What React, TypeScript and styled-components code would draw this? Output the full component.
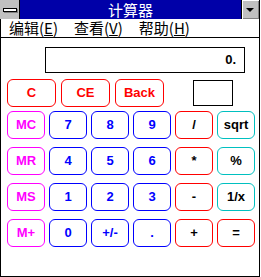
import { FC } from 'react';
import styled, { createGlobalStyle } from 'styled-components';

const GlobalStyle = createGlobalStyle`
  html, body {
    margin: 0;
    padding: 0;
    background: #ffffff;
  }
`;

const FONT = `"Liberation Sans", Arial, "Noto Sans CJK SC", sans-serif`;
const CJK = `"Noto Sans CJK SC", "Liberation Sans", sans-serif`;

const Window = styled.div`
  box-sizing: border-box;
  width: 260px;
  height: 277px;
  border: 1px solid #000000;
  border-top: none;
  background: #ffffff;
  display: flex;
  flex-direction: column;
  font-family: ${FONT};
`;

const TitleBar = styled.div`
  display: flex;
  align-items: center;
  height: 19px;
  margin: 0 -1px;
  background: #0000a8;
`;

const SysBox = styled.div`
  box-sizing: border-box;
  width: 20px;
  height: 19px;
  background: #c0c0c0;
  border-right: 1px solid #000000;
  display: flex;
  align-items: center;
  justify-content: center;
`;

const SysBar = styled.div`
  box-sizing: border-box;
  width: 14px;
  height: 4px;
  margin-top: 1px;
  background: #ffffff;
  border: 1px solid #000000;
  box-shadow: 1px 1px 0 #808080;
`;

const Title = styled.div`
  flex: 1;
  height: 19px;
  text-align: center;
  color: #ffffff;
  font-family: ${CJK};
  font-size: 15px;
  line-height: 19px;
  overflow: visible;
`;

const DropBox = styled.div`
  box-sizing: border-box;
  width: 19px;
  height: 19px;
  background: #c0c0c0;
  border-left: 1px solid #000000;
  border-right: 1px solid #000000;
  box-shadow: inset 1px 1px 0 #ffffff, inset -1px -1px 0 #808080;
  display: flex;
  align-items: center;
  justify-content: center;
`;

const Triangle = styled.div`
  width: 0;
  height: 0;
  border-left: 4px solid transparent;
  border-right: 4px solid transparent;
  border-top: 4px solid #000000;
  margin-left: -1px;
`;

const MenuBar = styled.div`
  display: flex;
  align-items: center;
  gap: 16px;
  height: 18px;
  padding-left: 8px;
  border-bottom: 1px solid #000000;
  font-family: ${CJK};
  font-size: 15px;
  line-height: 18px;
  color: #000000;
`;

const MenuItem = styled.span`
  white-space: nowrap;
  line-height: 18px;
`;

const Hotkey = styled.span`
  text-decoration: underline;
  text-underline-offset: 1px;
`;

const Body = styled.div`
  display: flex;
  flex-direction: column;
  padding: 9px 0 0 6px;
`;

const Display = styled.div`
  box-sizing: border-box;
  width: 200px;
  height: 26px;
  margin-left: 38px;
  border: 1px solid #000000;
  padding-right: 8px;
  text-align: right;
  font-size: 13px;
  font-weight: bold;
  line-height: 24px;
`;

const TopRow = styled.div`
  display: flex;
  align-items: center;
  gap: 5px;
  margin-top: 6px;
  height: 28px;
`;

const MemoryBox = styled.div`
  box-sizing: border-box;
  width: 40px;
  height: 26px;
  margin-left: 24px;
  border: 1px solid #000000;
`;

const Keypad = styled.div`
  display: grid;
  grid-template-columns: repeat(6, 38px);
  grid-auto-rows: 28px;
  column-gap: 4px;
  row-gap: 8px;
  margin-top: 4px;
`;

const Key = styled.button<{ $border: string; $color: string; $wide?: boolean }>`
  box-sizing: border-box;
  width: ${({ $wide }) => ($wide ? '49px' : '38px')};
  height: 28px;
  margin: 0;
  padding: 0;
  background: #ffffff;
  border: 1px solid ${({ $border }) => $border};
  border-radius: 6px;
  color: ${({ $color }) => $color};
  font-family: ${FONT};
  font-size: 13px;
  font-weight: bold;
  line-height: 26px;
  text-align: center;
`;

const RED = '#ff0000';
const BLUE = '#0000ff';
const PINK = '#ff00ff';
const CYAN = '#00c0c0';
const BLACK = '#000000';

type KeyDef = { label: string; border: string; color: string };

const keys: KeyDef[] = [
  { label: 'MC', border: PINK, color: PINK },
  { label: '7', border: BLUE, color: BLUE },
  { label: '8', border: BLUE, color: BLUE },
  { label: '9', border: BLUE, color: BLUE },
  { label: '/', border: RED, color: BLACK },
  { label: 'sqrt', border: CYAN, color: BLACK },
  { label: 'MR', border: PINK, color: PINK },
  { label: '4', border: BLUE, color: BLUE },
  { label: '5', border: BLUE, color: BLUE },
  { label: '6', border: BLUE, color: BLUE },
  { label: '*', border: RED, color: BLACK },
  { label: '%', border: CYAN, color: BLACK },
  { label: 'MS', border: PINK, color: PINK },
  { label: '1', border: BLUE, color: BLUE },
  { label: '2', border: BLUE, color: BLUE },
  { label: '3', border: BLUE, color: BLUE },
  { label: '-', border: RED, color: BLACK },
  { label: '1/x', border: CYAN, color: BLACK },
  { label: 'M+', border: PINK, color: PINK },
  { label: '0', border: BLUE, color: BLUE },
  { label: '+/-', border: BLUE, color: BLUE },
  { label: '.', border: BLUE, color: BLUE },
  { label: '+', border: RED, color: BLACK },
  { label: '=', border: RED, color: BLACK },
];

const menus = [
  { name: '编辑', key: 'E' },
  { name: '查看', key: 'V' },
  { name: '帮助', key: 'H' },
];

const App: FC = () => (
  <>
    <GlobalStyle />
    <Window>
      <TitleBar>
        <SysBox>
          <SysBar />
        </SysBox>
        <Title>计算器</Title>
        <DropBox>
          <Triangle />
        </DropBox>
      </TitleBar>
      <MenuBar>
        {menus.map((m) => (
          <MenuItem key={m.key}>
            {m.name}(<Hotkey>{m.key}</Hotkey>)
          </MenuItem>
        ))}
      </MenuBar>
      <Body>
        <Display>0.</Display>
        <TopRow>
          <Key $wide $border={RED} $color={RED}>C</Key>
          <Key $wide $border={RED} $color={RED}>CE</Key>
          <Key $wide $border={RED} $color={RED}>Back</Key>
          <MemoryBox />
        </TopRow>
        <Keypad>
          {keys.map((k) => (
            <Key key={k.label} $border={k.border} $color={k.color}>
              {k.label}
            </Key>
          ))}
        </Keypad>
      </Body>
    </Window>
  </>
);

export default App;
